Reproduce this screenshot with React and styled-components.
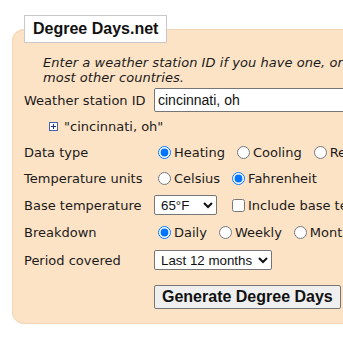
import React from "react";
import styled, { createGlobalStyle } from "styled-components";

const Global = createGlobalStyle`
  html, body {
    margin: 0;
    padding: 0;
    background: #fff;
    overflow: hidden;
  }
  body {
    font-family: "DejaVu Sans", Verdana, sans-serif;
    color: #1a1a1a;
  }
`;

const Page = styled.div`
  padding: 15px 0 0 12px;
  width: 620px;
`;

const Box = styled.fieldset`
  margin: 0;
  padding: 0 11px 14px 11px;
  min-width: 0;
  border: 1px solid #f1d5b6;
  border-radius: 12px;
  background: #fde3c6;
`;

const Legend = styled.legend`
  padding: 3px 8px;
  background: #fff;
  border: 1px solid #c8c8c8;
  font: bold 16px/20px "Liberation Sans", Arial, sans-serif;
  color: #111;
`;

const Intro = styled.p`
  margin: 12px 0 2px 19px;
  font-size: 13px;
  line-height: 15px;
  font-style: italic;
  letter-spacing: 0.05px;
  white-space: nowrap;
`;

const Row = styled.div`
  display: flex;
  align-items: center;
  height: ${(p) => p.$h || 26}px;
  font-size: 13px;
  white-space: nowrap;
`;

const Label = styled.span`
  flex: 0 0 130px;
`;

const TextInput = styled.input`
  box-sizing: border-box;
  width: 320px;
  height: 24px;
  padding: 1px 3px;
  border: 1px solid #767676;
  border-radius: 2px;
  background: #fff;
  font: 14px "Liberation Sans", Arial, sans-serif;
  color: #111;
`;

const Result = styled.div`
  display: flex;
  align-items: center;
  gap: 6px;
  padding-left: 25px;
`;

const Option = styled.label`
  display: inline-flex;
  align-items: center;
  margin-right: 8px;
  input {
    margin: 0 3px 0 4px;
  }
`;

const Select = styled.select`
  box-sizing: border-box;
  width: ${(p) => (p.$w ? `${p.$w}px` : "auto")};
  height: 20px;
  padding: 0 2px;
  border: 1px solid #767676;
  border-radius: 2px;
  background: #fff;
  font: 13.33px "Liberation Sans", Arial, sans-serif;
  color: #111;
`;

const Check = styled.label`
  display: inline-flex;
  align-items: center;
  margin-left: 11px;
  input {
    margin: 0 3px 0 4px;
  }
`;

const ButtonRow = styled.div`
  margin-top: 11px;
  padding-left: 130px;
`;

const Button = styled.button`
  height: 24px;
  padding: 0 7px;
  border: 1px solid #767676;
  border-radius: 2px;
  background: #efefef;
  font: bold 16px "Liberation Sans", Arial, sans-serif;
  color: #111;
`;

const ExpandIcon = () => (
  <svg width="9" height="9" viewBox="0 0 9 9">
    <rect x="0.5" y="0.5" width="8" height="8" fill="#fff" stroke="#4b5fb0" />
    <path d="M2 4.5h5M4.5 2v5" stroke="#1e2f8a" strokeWidth="1" />
  </svg>
);

const Radio = ({ name, checked, children }) => (
  <Option>
    <input type="radio" name={name} defaultChecked={checked} />
    {children}
  </Option>
);

export default function App() {
  return (
    <Page>
      <Global />
      <Box>
        <Legend>Degree Days.net</Legend>
        <Intro>
          Enter a weather station ID if you have one, or a location for the US, Canada, UK and
          <br />
          most other countries.
        </Intro>
        <Row>
          <Label>Weather station ID</Label>
          <TextInput defaultValue="cincinnati, oh" />
        </Row>
        <Row>
          <Result>
            <ExpandIcon />
            "cincinnati, oh"
          </Result>
        </Row>
        <Row>
          <Label>Data type</Label>
          <Radio name="type" checked>Heating</Radio>
          <Radio name="type">Cooling</Radio>
          <Radio name="type">Relative</Radio>
        </Row>
        <Row>
          <Label>Temperature units</Label>
          <Radio name="unit">Celsius</Radio>
          <Radio name="unit" checked>Fahrenheit</Radio>
        </Row>
        <Row $h={28}>
          <Label>Base temperature</Label>
          <Select $w={63} defaultValue="65">
            <option value="60">60°F</option>
            <option value="65">65°F</option>
            <option value="70">70°F</option>
          </Select>
          <Check>
            <input type="checkbox" />
            Include base temperatures
          </Check>
        </Row>
        <Row $h={27}>
          <Label>Breakdown</Label>
          <Radio name="bd" checked>Daily</Radio>
          <Radio name="bd">Weekly</Radio>
          <Radio name="bd">Monthly</Radio>
        </Row>
        <Row $h={28}>
          <Label>Period covered</Label>
          <Select defaultValue="12">
            <option value="12">Last 12 months</option>
            <option value="24">Last 24 months</option>
          </Select>
        </Row>
        <ButtonRow>
          <Button type="button">Generate Degree Days</Button>
        </ButtonRow>
      </Box>
    </Page>
  );
}
